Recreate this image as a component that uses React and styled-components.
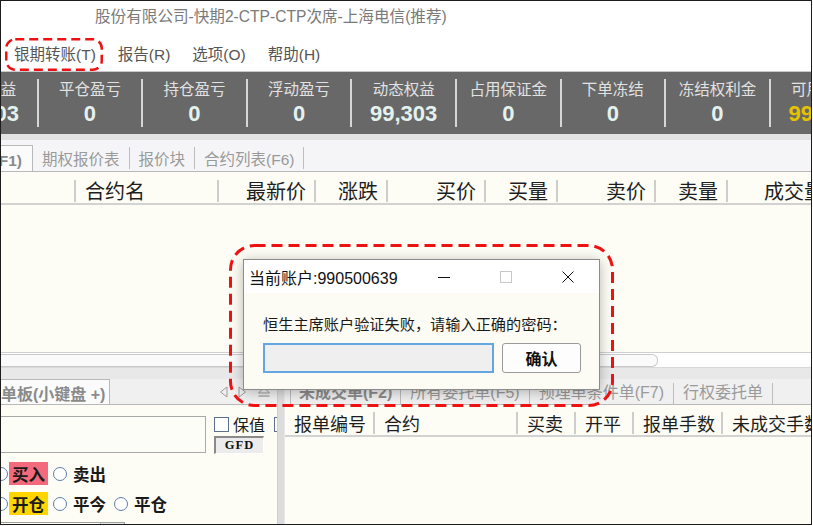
import React from 'react';
import styled, { createGlobalStyle } from 'styled-components';

const UI = `"Liberation Sans", "Noto Sans CJK SC", sans-serif`;
const CJK = `"Noto Sans CJK SC", "Liberation Sans", sans-serif`;

const GlobalStyle = createGlobalStyle`
  html, body { margin: 0; padding: 0; background: #fff; }
  body { font-family: ${UI}; }
  * { box-sizing: border-box; }
`;

const Frame = styled.div`
  position: relative;
  width: 812px;
  height: 525px;
  border: 1px solid #1c1c1c;
  overflow: hidden;
  display: flex;
  flex-direction: column;
  background: #fff;
`;

const TitleBar = styled.div`
  height: 37px;
  flex: none;
  padding: 5px 0 0 94px;
  font-family: ${UI};
  font-size: 15.6px;
  line-height: 22px;
  color: #7a7a7a;
  white-space: nowrap;
  overflow: hidden;
`;

const MenuBar = styled.div`
  height: 34px;
  flex: none;
  display: flex;
  align-items: center;
  gap: 22px;
  padding-left: 13px;
  border-bottom: 1px solid #c9c9c9;
`;

const MenuItem = styled.span`
  font-family: ${UI};
  font-size: 15.5px;
  color: #555;
  line-height: 20px;
  white-space: nowrap;
`;

const StatsBar = styled.div`
  height: 62px;
  flex: none;
  background: #686868;
  display: flex;
  align-items: center;
  overflow: hidden;
`;

const StatsTrack = styled.div`
  display: flex;
  align-items: center;
  margin-left: -67px;
  height: 100%;
`;

const StatCell = styled.div`
  width: 102.6px;
  flex: none;
  display: flex;
  flex-direction: column;
  align-items: center;
  padding-top: 6px;
  height: 100%;
`;

const StatLabel = styled.div`
  font-family: ${CJK};
  font-size: 15.5px;
  line-height: 20px;
  color: #e2e2e2;
  white-space: nowrap;
`;

const StatValue = styled.div`
  margin-top: 3px;
  font-family: "Liberation Sans", Arial, sans-serif;
  font-weight: bold;
  font-size: 22px;
  line-height: 26px;
  color: ${p => (p.$hi ? '#e6c200' : '#e4f2ee')};
  white-space: nowrap;
`;

const StatSep = styled.div`
  width: 2px;
  height: 48px;
  flex: none;
  background: #d6d6d6;
`;

const Band = styled.div`
  height: ${p => p.$h}px;
  flex: none;
  background: ${p => p.$bg || '#e6e6e6'};
`;

const TabStrip = styled.div`
  height: ${p => p.$h || 32}px;
  flex: none;
  display: flex;
  align-items: flex-end;
  background: ${p => p.$bg || '#f5f5f7'};
  border-bottom: 1px solid #b9b9b9;
  padding-left: ${p => p.$pad || 0}px;
  overflow: hidden;
`;

const ActiveTab = styled.div`
  width: ${p => p.$w}px;
  height: ${p => p.$th}px;
  flex: none;
  margin-bottom: -1px;
  background: #fbfbfb;
  border-top: 1px solid #b9b9b9;
  border-right: 1px solid #b9b9b9;
  display: flex;
  align-items: center;
  justify-content: ${p => (p.$end ? 'flex-end' : 'flex-start')};
  padding-right: ${p => (p.$end ? 10 : 0)}px;
  overflow: hidden;
  font-family: ${UI};
  font-weight: bold;
  font-size: ${p => p.$fs || 15.5}px;
  color: #8a8a8a;
  white-space: nowrap;
`;

const PlainTab = styled.div`
  height: 27px;
  flex: none;
  display: flex;
  align-items: center;
  padding: 0 ${p => p.$px || 9}px;
  font-family: ${UI};
  font-size: ${p => p.$fs || 15.5}px;
  font-weight: ${p => (p.$bold ? 'bold' : 'normal')};
  color: ${p => (p.$bold ? '#8c8c8c' : '#9a9a9a')};
  white-space: nowrap;
`;

const TabSep = styled.div`
  width: 1px;
  height: 22px;
  flex: none;
  align-self: center;
  margin-top: 4px;
  background: #bdbdbd;
`;

const HeaderRow = styled.div`
  height: ${p => p.$h}px;
  flex: none;
  display: flex;
  align-items: center;
  padding-top: ${p => p.$pt || 0}px;
  background: #fdfdf5;
  border-bottom: 2px solid #d2d2d2;
  overflow: hidden;
`;

const HeaderCell = styled.div`
  width: ${p => p.$w - 2}px;
  flex: none;
  display: flex;
  justify-content: ${p => (p.$right ? 'flex-end' : 'flex-start')};
  padding: 0 ${p => (p.$right ? 8 : 0)}px 0 ${p => (p.$right ? 0 : 9)}px;
  font-family: ${CJK};
  font-size: ${p => p.$fs}px;
  line-height: 24px;
  color: #1e1e1e;
  white-space: nowrap;
`;

const HeaderSep = styled.div`
  width: 2px;
  height: 22px;
  flex: none;
  background: #cdcdcd;
`;

const Body = styled.div`
  background: #fdfdf5;
  height: ${p => (p.$h ? `${p.$h}px` : 'auto')};
  flex: ${p => (p.$h ? 'none' : '1')};
`;

const ScrollTrack = styled.div`
  height: 16px;
  flex: none;
  background: #fff;
  border-top: 1px solid #cfcfcf;
  border-bottom: 1px solid #d8d8d8;
  display: flex;
  align-items: center;
`;

const ScrollThumb = styled.div`
  width: 657px;
  height: 13px;
  background: #fafafa;
  border: 1px solid #c9c9c9;
  border-left: none;
  border-radius: 0 6px 6px 0;
`;

const Bottom = styled.div`
  flex: 1;
  display: flex;
  min-height: 0;
`;

const LeftPanel = styled.div`
  width: 276px;
  flex: none;
  display: flex;
  flex-direction: column;
  overflow: hidden;
  background: #fdfdf5;
`;

const Divider = styled.div`
  width: 8px;
  flex: none;
  background: #dcdcdc;
  border-left: 1px solid #cfcfcf;
  border-right: 1px solid #e8e8e8;
`;

const RightPanel = styled.div`
  flex: 1;
  display: flex;
  flex-direction: column;
  overflow: hidden;
  background: #fdfdf5;
`;

const NavIcons = styled.div`
  margin-left: auto;
  display: flex;
  align-items: center;
  gap: 10px;
  height: 25px;
  padding-right: 6px;
`;

const LeftBody = styled.div`
  flex: 1;
  padding-top: 11px;
  display: flex;
  flex-direction: column;
`;

const OrderRow = styled.div`
  display: flex;
  height: 38px;
`;

const CodeInput = styled.div`
  width: 207px;
  height: 37px;
  margin-left: -2px;
  flex: none;
  border: 1px solid #a9a9a9;
  background: #fdfdf7;
`;

const SideGroup = styled.div`
  margin-left: 8px;
  display: flex;
  flex-direction: column;
  gap: 3px;
`;

const CheckLine = styled.div`
  display: flex;
  align-items: center;
  gap: 4px;
  height: 17px;
  white-space: nowrap;
`;

const CheckBox = styled.span`
  width: 15px;
  height: 15px;
  flex: none;
  border: 1px solid #5c6f8c;
  background: #fff;
  margin-left: ${p => p.$ml || 0}px;
`;

const CheckText = styled.span`
  font-family: ${CJK};
  font-size: 16px;
  line-height: 17px;
  color: #1a1a1a;
`;

const GfdBox = styled.div`
  width: 50px;
  height: 19px;
  background: #ececec;
  border-top: 2px solid #8a8a8a;
  border-left: 2px solid #8a8a8a;
  border-right: 1px solid #fff;
  border-bottom: 1px solid #fff;
  display: flex;
  align-items: center;
  justify-content: center;
  font-family: "Liberation Serif", serif;
  font-weight: bold;
  font-size: 12.5px;
  letter-spacing: 1px;
  color: #111;
`;

const RadioRow = styled.div`
  display: flex;
  align-items: center;
  height: 23px;
  margin-top: ${p => p.$mt}px;
  margin-left: -7px;
`;

const Radio = styled.span`
  width: 14px;
  height: 14px;
  flex: none;
  border-radius: 50%;
  border: 1.5px solid #5b7ea9;
  background: #fff;
  margin-right: ${p => p.$mr ?? 3}px;
`;

const RadioLabel = styled.span`
  height: 23px;
  display: inline-flex;
  align-items: center;
  padding: 0 3px;
  margin-right: ${p => p.$mr || 5}px;
  background: ${p => p.$bg || 'transparent'};
  font-family: ${CJK};
  font-weight: bold;
  font-size: 16.5px;
  color: #1a1a1a;
  white-space: nowrap;
`;

const SelectRow = styled.div`
  display: flex;
  align-items: flex-start;
  margin-top: 7px;
  height: 12px;
`;

const SelectBox = styled.div`
  width: 126px;
  height: 12px;
  margin-left: -2px;
  border: 1px solid #a0a0a0;
  border-bottom: none;
  display: flex;
  justify-content: flex-end;
`;

const SelectBtn = styled.div`
  width: 24px;
  border-left: 1px solid #b0b0b0;
  background: #e6e6e6;
`;

const Dialog = styled.div`
  position: absolute;
  left: 242px;
  top: 258px;
  width: 357px;
  height: 131px;
  border: 1px solid #8c8c8c;
  background: #fcfcf4;
  box-shadow: 0 2px 12px rgba(0, 0, 0, 0.28);
  display: flex;
  flex-direction: column;
`;

const DialogTitle = styled.div`
  height: 33px;
  flex: none;
  background: #fff;
  display: flex;
  align-items: center;
  padding-left: 5px;
  font-family: ${UI};
  font-size: 16px;
  color: #111;
  white-space: nowrap;
`;

const WinButtons = styled.div`
  margin-left: auto;
  display: flex;
  align-items: center;
`;

const WinBtn = styled.span`
  width: 62px;
  height: 33px;
  display: flex;
  align-items: center;
  justify-content: center;
`;

const DialogBody = styled.div`
  flex: 1;
  padding: 20px 0 0 19px;
`;

const Message = styled.div`
  font-family: ${CJK};
  font-size: 15.2px;
  line-height: 20px;
  color: #1a1a1a;
  white-space: nowrap;
`;

const DialogRow = styled.div`
  margin-top: 10px;
  display: flex;
  gap: 8px;
`;

const PwdInput = styled.div`
  width: 231px;
  height: 30px;
  background: #efefef;
  border: 2px solid #64a6e2;
`;

const OkButton = styled.div`
  width: 79px;
  height: 30px;
  border: 1px solid #9a9a9a;
  border-radius: 3px;
  background: #fdfdfd;
  display: flex;
  align-items: center;
  justify-content: center;
  font-family: ${CJK};
  font-weight: bold;
  font-size: 16px;
  color: #111;
`;

const Highlight = styled.svg`
  position: absolute;
  left: ${p => p.$x}px;
  top: ${p => p.$y}px;
  overflow: visible;
  pointer-events: none;
`;

const stats = [
  ['静态权益', '99,303'],
  ['平仓盈亏', '0'],
  ['持仓盈亏', '0'],
  ['浮动盈亏', '0'],
  ['动态权益', '99,303'],
  ['占用保证金', '0'],
  ['下单冻结', '0'],
  ['冻结权利金', '0'],
  ['可用资金', '99,303', true],
];

const quoteCols = [
  { w: 75, t: '' },
  { w: 143, t: '合约名' },
  { w: 97, t: '最新价', r: true },
  { w: 72, t: '涨跌', r: true },
  { w: 98, t: '买价', r: true },
  { w: 72, t: '买量', r: true },
  { w: 98, t: '卖价', r: true },
  { w: 72, t: '卖量', r: true },
  { w: 106, t: '成交量', r: true, last: true },
];

const orderCols = [
  { w: 90, t: '报单编号' },
  { w: 143, t: '合约' },
  { w: 58, t: '买卖' },
  { w: 58, t: '开平' },
  { w: 89, t: '报单手数' },
  { w: 120, t: '未成交手数', last: true },
];

function DashedBox({ x, y, w, h, r, dash, sw }) {
  return (
    <Highlight $x={x} $y={y} width={w} height={h}>
      <rect x={sw / 2} y={sw / 2} width={w - sw} height={h - sw} rx={r} ry={r}
        fill="none" stroke="#ee1111" strokeWidth={sw} strokeDasharray={dash} />
    </Highlight>
  );
}

function Header({ cols, fs, h, pt }) {
  return (
    <HeaderRow $h={h} $pt={pt}>
      {cols.map((c, i) => (
        <React.Fragment key={i}>
          <HeaderCell $w={c.w} $right={c.r} $fs={fs}>{c.t}</HeaderCell>
          {!c.last && <HeaderSep />}
        </React.Fragment>
      ))}
    </HeaderRow>
  );
}

export default function App() {
  return (
    <>
      <GlobalStyle />
      <Frame>
        <TitleBar>股份有限公司-快期2-CTP-CTP次席-上海电信(推荐)</TitleBar>
        <MenuBar>
          <MenuItem>银期转账(T)</MenuItem>
          <MenuItem>报告(R)</MenuItem>
          <MenuItem>选项(O)</MenuItem>
          <MenuItem>帮助(H)</MenuItem>
        </MenuBar>
        <StatsBar>
          <StatsTrack>
            {stats.map(([l, v, hi], i) => (
              <React.Fragment key={l}>
                {i > 0 && <StatSep />}
                <StatCell>
                  <StatLabel>{l}</StatLabel>
                  <StatValue $hi={hi}>{v}</StatValue>
                </StatCell>
              </React.Fragment>
            ))}
          </StatsTrack>
        </StatsBar>
        <Band $h={6} $bg="#e3e3e3" />
        <TabStrip $h={32}>
          <ActiveTab $w={32} $th={27} $end>行情报价(F1)</ActiveTab>
          <PlainTab>期权报价表</PlainTab>
          <TabSep />
          <PlainTab>报价块</PlainTab>
          <TabSep />
          <PlainTab>合约列表(F6)</PlainTab>
          <TabSep />
        </TabStrip>
        <Header cols={quoteCols} fs={20} h={33} pt={6} />
        <Body $h={147} />
        <ScrollTrack>
          <ScrollThumb />
        </ScrollTrack>
        <Band $h={11} $bg="#e8e8e8" />
        <Bottom>
          <LeftPanel>
            <TabStrip $h={26} $bg="#f0f0f0">
              <ActiveTab $w={109} $th={26} $fs={16}>单板(小键盘 +)</ActiveTab>
              <NavIcons>
                <svg width="9" height="12" viewBox="0 0 9 12">
                  <path d="M8 1 L1.5 6 L8 11 Z" fill="none" stroke="#9a9a9a" strokeWidth="1" />
                </svg>
                <svg width="9" height="12" viewBox="0 0 9 12">
                  <path d="M1 1 L7.5 6 L1 11 Z" fill="none" stroke="#9a9a9a" strokeWidth="1" />
                </svg>
                <svg width="14" height="12" viewBox="0 0 14 12">
                  <path d="M1.5 7 L7 1.5 L12.5 7 Z" fill="none" stroke="#9a9a9a" strokeWidth="1" />
                  <path d="M1.5 10 H12.5" stroke="#9a9a9a" strokeWidth="1.2" />
                </svg>
              </NavIcons>
            </TabStrip>
            <LeftBody>
              <OrderRow>
                <CodeInput />
                <SideGroup>
                  <CheckLine>
                    <CheckBox />
                    <CheckText>保值</CheckText>
                    <CheckBox $ml={5} />
                  </CheckLine>
                  <GfdBox>GFD</GfdBox>
                </SideGroup>
              </OrderRow>
              <RadioRow $mt={8}>
                <Radio $mr={1} />
                <RadioLabel $bg="#f36a7c">买入</RadioLabel>
                <Radio />
                <RadioLabel>卖出</RadioLabel>
              </RadioRow>
              <RadioRow $mt={7}>
                <Radio $mr={1} />
                <RadioLabel $bg="#ffd500">开仓</RadioLabel>
                <Radio />
                <RadioLabel $mr={5}>平今</RadioLabel>
                <Radio />
                <RadioLabel>平仓</RadioLabel>
              </RadioRow>
              <SelectRow>
                <SelectBox>
                  <SelectBtn />
                </SelectBox>
              </SelectRow>
            </LeftBody>
          </LeftPanel>
          <Divider />
          <RightPanel>
            <TabStrip $h={26} $bg="#f0f0f0" $pad={5}>
              <TabSep />
              <PlainTab $fs={16} $px={8} $bold>未成交单(F2)</PlainTab>
              <TabSep />
              <PlainTab $fs={16} $px={9}>所有委托单(F5)</PlainTab>
              <TabSep />
              <PlainTab $fs={16} $px={9}>预埋单条件单(F7)</PlainTab>
              <TabSep />
              <PlainTab $fs={16} $px={9}>行权委托单</PlainTab>
              <TabSep />
            </TabStrip>
            <Header cols={orderCols} fs={18} h={32} pt={5} />
            <Body />
          </RightPanel>
        </Bottom>

        <Dialog>
          <DialogTitle>
            当前账户:990500639
            <WinButtons>
              <WinBtn>
                <svg width="12" height="12" viewBox="0 0 12 12">
                  <path d="M0 6.5 H12" stroke="#111" strokeWidth="1" />
                </svg>
              </WinBtn>
              <WinBtn>
                <svg width="12" height="12" viewBox="0 0 12 12">
                  <rect x="0.5" y="0.5" width="11" height="11" fill="none" stroke="#c8c8c8" strokeWidth="1" />
                </svg>
              </WinBtn>
              <WinBtn>
                <svg width="12" height="12" viewBox="0 0 12 12">
                  <path d="M0.5 0.5 L11.5 11.5 M11.5 0.5 L0.5 11.5" stroke="#111" strokeWidth="1" />
                </svg>
              </WinBtn>
            </WinButtons>
          </DialogTitle>
          <DialogBody>
            <Message>恒生主席账户验证失败，请输入正确的密码：</Message>
            <DialogRow>
              <PwdInput />
              <OkButton>确认</OkButton>
            </DialogRow>
          </DialogBody>
        </Dialog>

        <DashedBox x={4} y={37} w={98} h={33} r={9} dash="9 5" sw={2.5} />
        <DashedBox x={228} y={243} w={385} h={163} r={24} dash="11 6" sw={3} />
      </Frame>
    </>
  );
}
